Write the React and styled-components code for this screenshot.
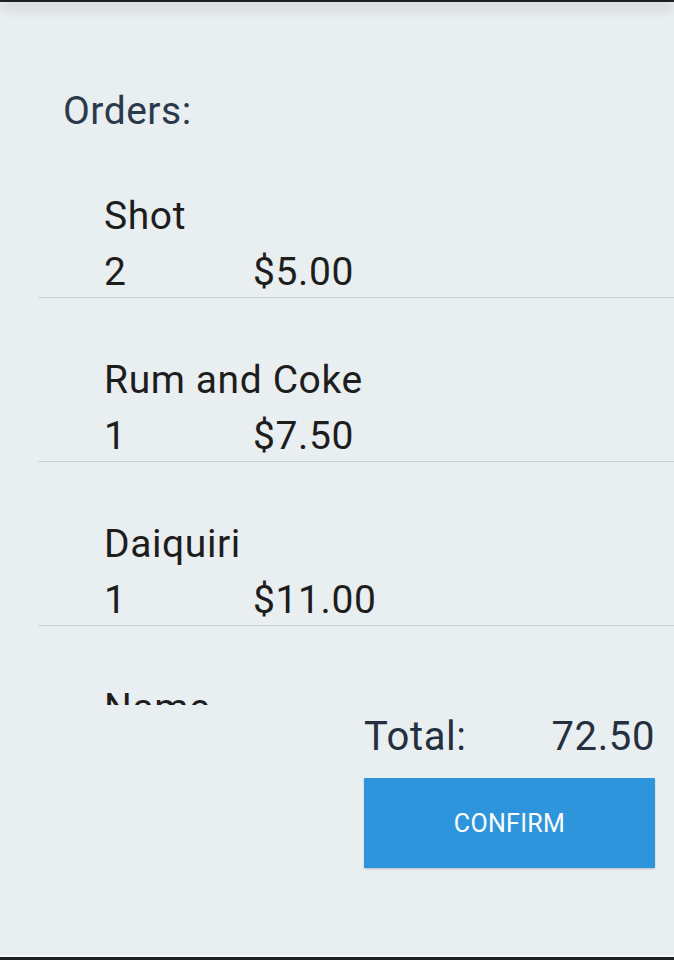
import React from "react";
import styled, { createGlobalStyle } from "styled-components";

const GlobalStyle = createGlobalStyle`
  html, body {
    margin: 0;
    padding: 0;
    background: #e9eef0;
  }
  #root {
    height: 960px;
  }
`;

const Screen = styled.div`
  display: flex;
  flex-direction: column;
  height: 960px;
  background: #e9eef0;
  font-family: Roboto, "Liberation Sans", sans-serif;
  overflow: hidden;
`;

const TopBar = styled.div`
  height: 2px;
  background: #1e1f20;
  box-shadow: 0 5px 12px rgba(0, 0, 0, 0.42);
  position: relative;
  z-index: 1;
`;

const Content = styled.div`
  flex: 1;
  display: flex;
  flex-direction: column;
  padding-top: 86px;
`;

const Heading = styled.div`
  margin-left: 63px;
  font-size: 39px;
  line-height: 46px;
  letter-spacing: 0.5px;
  color: #2a394c;
`;

const List = styled.div`
  height: 571px;
  overflow: hidden;
`;

const Item = styled.div`
  margin-left: 38px;
  padding: 54px 0 0 66px;
  border-bottom: 1px solid #c8cfd1;
  color: #1d1d1d;
  font-size: 39px;
  letter-spacing: 0.6px;
`;

const Name = styled.div`
  line-height: 56px;
`;

const Detail = styled.div`
  display: flex;
  margin-top: 3px;
  line-height: 50px;
`;

const Qty = styled.span`
  width: 149px;
`;

const Footer = styled.div`
  align-self: flex-end;
  width: 291px;
  margin: 4px 19px 0 0;
  display: flex;
  flex-direction: column;
`;

const TotalRow = styled.div`
  display: flex;
  justify-content: space-between;
  font-size: 40px;
  line-height: 56px;
  letter-spacing: 0.6px;
  color: #24303f;
`;

const ConfirmButton = styled.button`
  margin-top: 13px;
  height: 90px;
  border: none;
  border-radius: 1px;
  background: #2e95dc;
  color: #ffffff;
  font-family: Roboto, "Liberation Sans", sans-serif;
  font-size: 25px;
  letter-spacing: 0.3px;
  box-shadow: 0 1px 2px rgba(0, 0, 0, 0.2);
  cursor: pointer;
`;

const BottomBar = styled.div`
  height: 3px;
  background: #1e1f20;
  border-top: 2px solid #f4f6f7;
`;

const orders = [
  { name: "Shot", qty: 2, price: "$5.00" },
  { name: "Rum and Coke", qty: 1, price: "$7.50" },
  { name: "Daiquiri", qty: 1, price: "$11.00" },
  { name: "Name" },
];

export default function App() {
  return (
    <>
      <GlobalStyle />
      <Screen>
        <TopBar />
        <Content>
          <Heading>Orders:</Heading>
          <List>
            {orders.map((o, i) => (
              <Item key={i}>
                <Name>{o.name}</Name>
                {o.price && (
                  <Detail>
                    <Qty>{o.qty}</Qty>
                    <span>{o.price}</span>
                  </Detail>
                )}
              </Item>
            ))}
          </List>
          <Footer>
            <TotalRow>
              <span>Total:</span>
              <span>72.50</span>
            </TotalRow>
            <ConfirmButton>CONFIRM</ConfirmButton>
          </Footer>
        </Content>
        <BottomBar />
      </Screen>
    </>
  );
}
